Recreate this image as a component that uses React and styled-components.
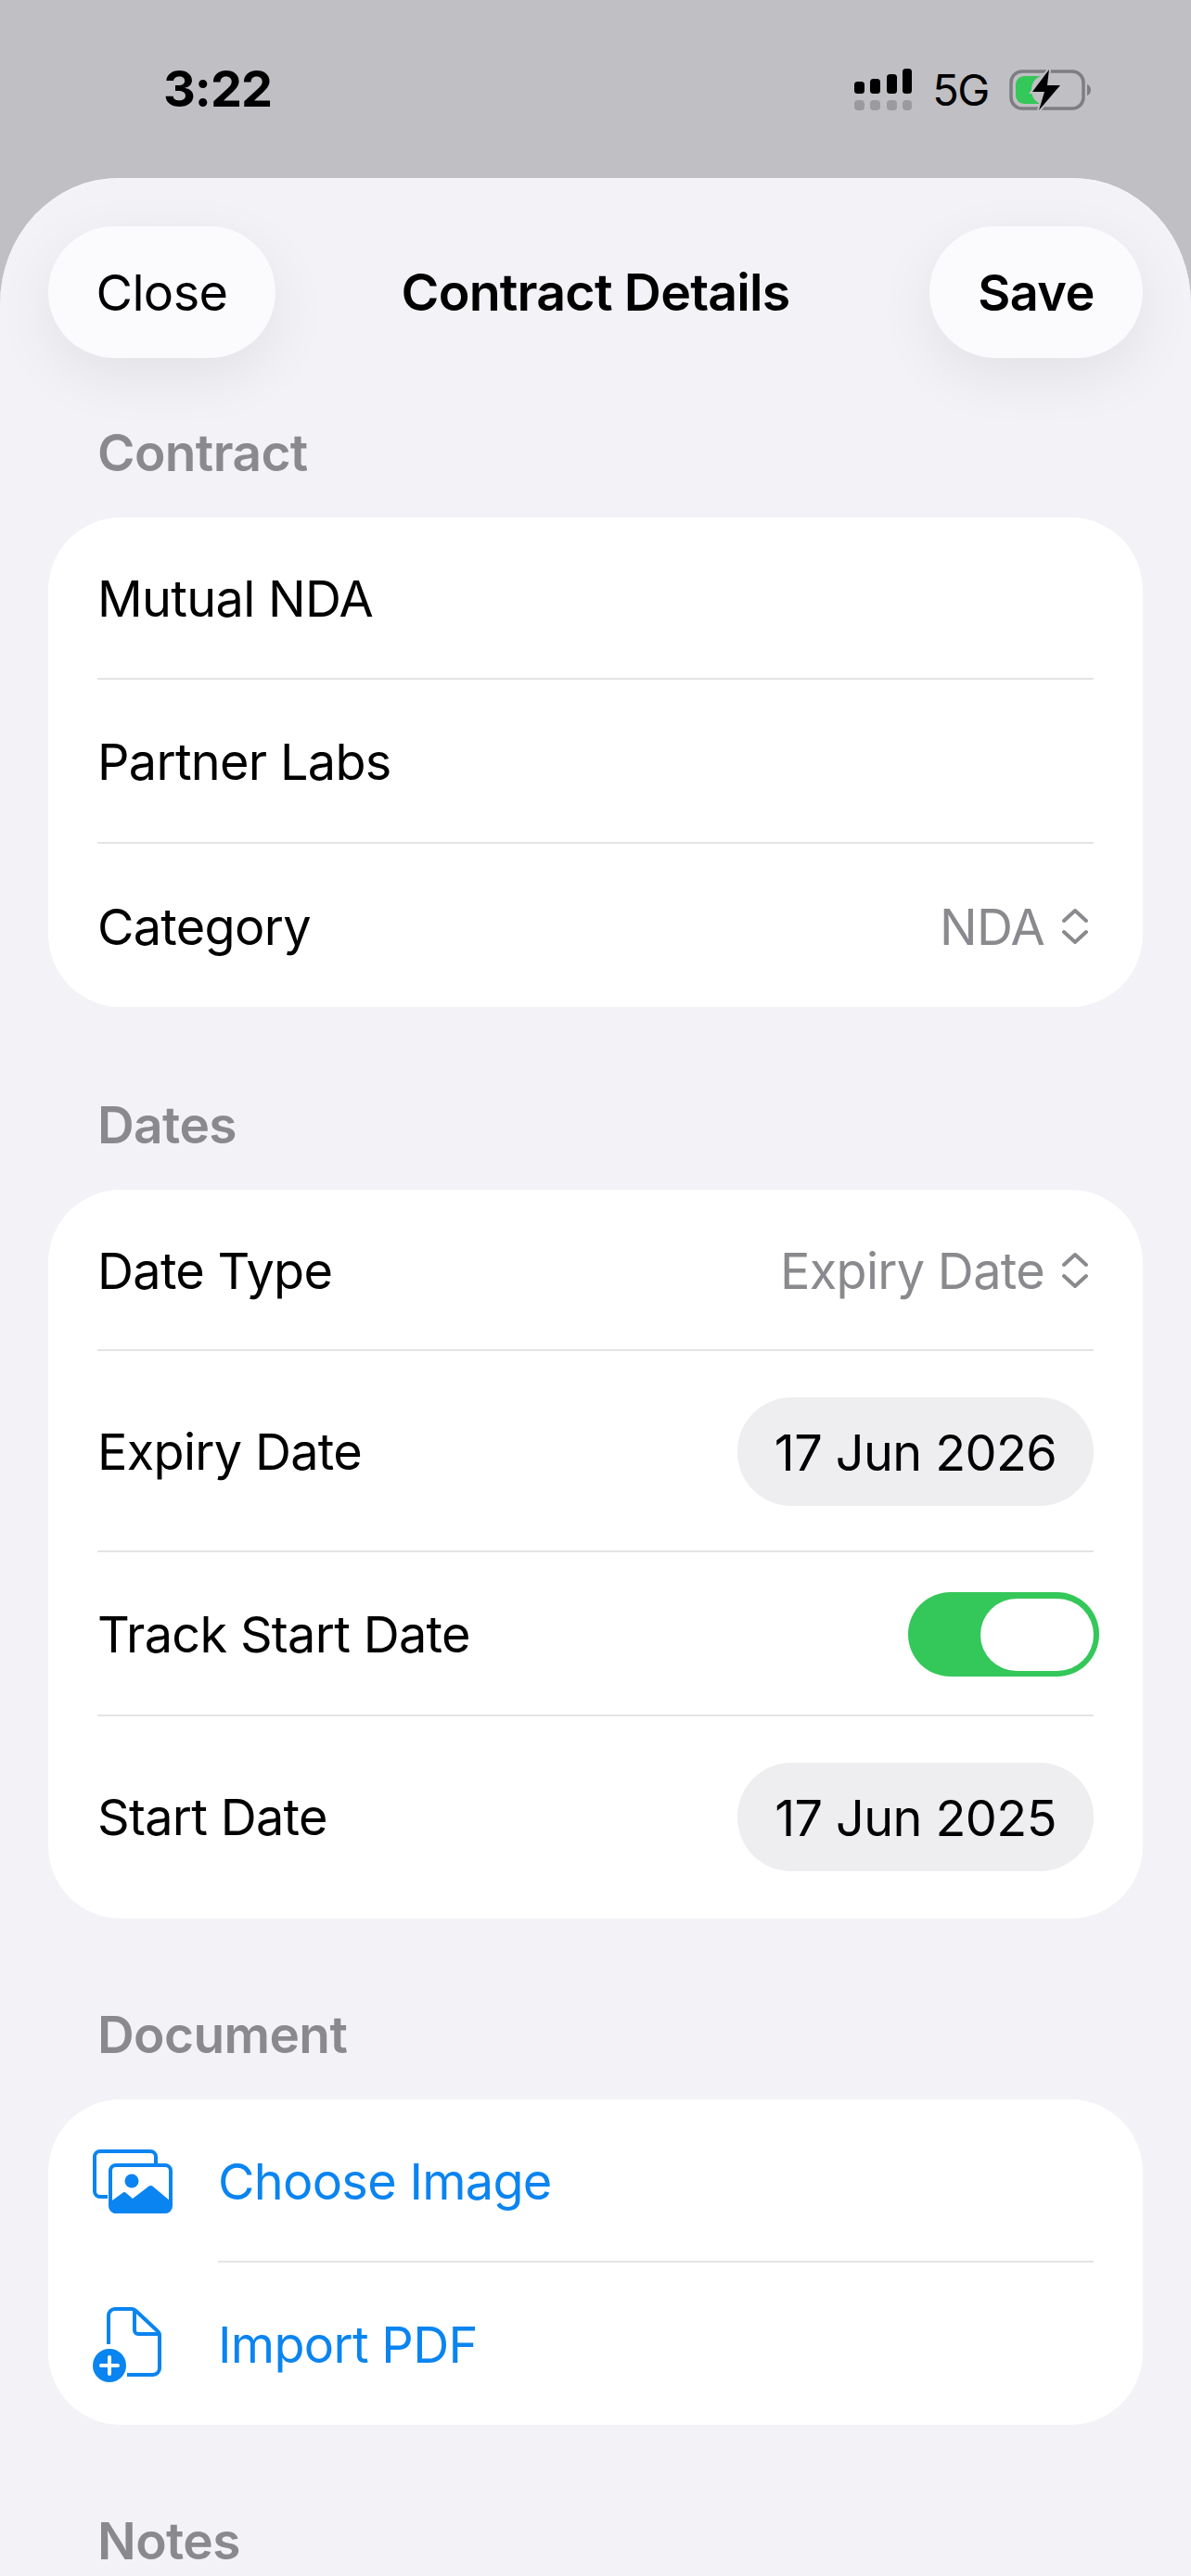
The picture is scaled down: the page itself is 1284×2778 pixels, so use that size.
import React from 'react';
import styled, { createGlobalStyle } from 'styled-components';

const GlobalStyle = createGlobalStyle`
  html, body {
    margin: 0;
    padding: 0;
    background: #c0bfc4;
  }
  body {
    font-family: Inter, "Noto Sans", "Liberation Sans", sans-serif;
    color: #000;
    -webkit-font-smoothing: antialiased;
  }
`;

const Screen = styled.div`
  width: 1284px;
  height: 2778px;
  overflow: hidden;
  display: flex;
  flex-direction: column;
  background: #c0bfc4;
`;

const StatusBar = styled.header`
  height: 192px;
  flex-shrink: 0;
  display: flex;
  align-items: flex-start;
  justify-content: space-between;
  padding: 66px 106px 0 176px;
  box-sizing: border-box;
`;

const Time = styled.span`
  font-size: 54px;
  line-height: 60px;
  font-weight: 700;
  letter-spacing: -1px;
`;

const StatusIcons = styled.div`
  display: flex;
  align-items: center;
  gap: 22px;
  margin-top: 6px;
`;

const Network = styled.span`
  font-size: 47px;
  line-height: 50px;
  font-weight: 400;
  letter-spacing: -1.4px;
`;

const Sheet = styled.main`
  flex: 1;
  background: #f2f2f7;
  border-radius: 128px 128px 0 0 / 136px 136px 0 0;
  padding: 0 52px;
  box-shadow: inset 0 1px 0 #f7f7fa;
`;

const NavBar = styled.nav`
  display: grid;
  grid-template-columns: 1fr auto 1fr;
  align-items: center;
  padding-top: 52px;
  height: 142px;
  box-sizing: content-box;
`;

const NavButton = styled.button`
  all: unset;
  box-sizing: border-box;
  height: 142px;
  width: ${(p) => p.$width}px;
  justify-self: ${(p) => (p.$bold ? 'end' : 'start')};
  border-radius: 71px;
  background: #fbfbfe;
  box-shadow: 0 20px 64px rgba(0, 0, 0, 0.07);
  font-size: 54px;
  letter-spacing: -0.6px;
  font-weight: ${(p) => (p.$bold ? 600 : 400)};
  display: flex;
  align-items: center;
  justify-content: center;
`;

const Title = styled.h1`
  margin: 0;
  font-size: 55.5px;
  line-height: 60px;
  font-weight: 600;
  letter-spacing: -0.8px;
`;

const SectionLabel = styled.h2`
  margin: ${(p) => p.$top}px 0 0 53px;
  height: 60px;
  font-size: 55px;
  line-height: 60px;
  font-weight: 600;
  letter-spacing: -0.6px;
  color: #8a8a8e;
`;

const Card = styled.section`
  margin-top: 40px;
  background: #fff;
  border-radius: 78px;
  overflow: hidden;
`;

const Row = styled.div`
  height: ${(p) => p.$height || 175}px;
  box-sizing: border-box;
  display: flex;
  align-items: center;
  justify-content: space-between;
  padding: 2px 53px ${(p) => p.$bottom || 0}px 53px;
  font-size: 54px;
  letter-spacing: -0.7px;
`;

const ActionRow = styled(Row)`
  justify-content: flex-start;
  padding-left: 48px;
  color: #0a84f0;
`;

const IconSlot = styled.span`
  width: 135px;
  flex-shrink: 0;
  display: flex;
  align-items: center;
`;

const Divider = styled.div`
  height: 2px;
  margin: 0 53px 0 ${(p) => p.$inset || 53}px;
  background: #e4e4e6;
`;

const Picker = styled.span`
  display: flex;
  align-items: center;
  gap: 18px;
  margin-right: 5px;
  color: #8a8a8e;
`;

const DatePill = styled.span`
  height: 117px;
  width: 384px;
  border-radius: 58px;
  background: #eeeef0;
  display: flex;
  align-items: center;
  justify-content: center;
  padding-top: 1px;
  box-sizing: border-box;
  color: #000;
  letter-spacing: -0.6px;
`;

const Toggle = styled.span`
  width: 206px;
  height: 91px;
  margin-right: -6px;
  border-radius: 46px;
  background: #34c759;
  display: flex;
  align-items: center;
  justify-content: flex-end;
  padding-right: 6px;
  box-sizing: border-box;
`;

const ToggleThumb = styled.span`
  width: 122px;
  height: 78px;
  border-radius: 39px;
  background: #fff;
`;

const SignalIcon = () => (
  <svg width="62" height="46" viewBox="0 0 62 46" fill="#000">
    <rect x="0" y="14" width="11" height="13" rx="3.5" />
    <rect x="17" y="11" width="11" height="16" rx="3.5" />
    <rect x="35" y="6" width="11" height="21" rx="3.5" />
    <rect x="52" y="0" width="10" height="27" rx="3.5" />
    <g fill="#9b9a9f">
      <rect x="0" y="34" width="11" height="11" rx="4" />
      <rect x="17" y="34" width="11" height="11" rx="4" />
      <rect x="35" y="34" width="11" height="11" rx="4" />
      <rect x="52" y="34" width="10" height="11" rx="4" />
    </g>
  </svg>
);

const BatteryIcon = () => (
  <svg width="90" height="46" viewBox="0 0 90 46">
    <rect x="2" y="3" width="78" height="40" rx="12" fill="none" stroke="#7e7e82" strokeWidth="3.5" />
    <path d="M84 17c3 1 4 4 4 6s-1 5-4 6z" fill="#7e7e82" />
    <path d="M7 18c0-6 4-10 10-10h17c-6 2-10 8-10 15s4 13 10 15H17c-6 0-10-4-10-10z" fill="#34c759" />
    <path d="M43 1L25 25h13l-6 20 23-27H41l2-17z" fill="#000" stroke="#c0bfc4" strokeWidth="4" paintOrder="stroke" />
  </svg>
);

const UpDownIcon = () => (
  <svg width="30" height="42" viewBox="0 0 30 42" fill="none" stroke="currentColor" strokeWidth="4" strokeLinecap="round" strokeLinejoin="round">
    <path d="M3 15L15 4l12 11" />
    <path d="M3 27l12 11 12-11" />
  </svg>
);

const ImagesIcon = () => (
  <svg width="86" height="69" viewBox="0 0 86 69" fill="none" stroke="#0a84f0" strokeWidth="4">
    <path d="M16 51H8a6 6 0 0 1-6-6V8a6 6 0 0 1 6-6h54a6 6 0 0 1 6 6v7" />
    <rect x="19" y="17" width="65" height="50" rx="6" />
    <circle cx="42" cy="34" r="7.5" fill="#0a84f0" stroke="none" />
    <path d="M21 55L32 47a3 3 0 0 1 4 0L43 53 60 40a4 4 0 0 1 5 0L84 56V62a7 7 0 0 1-7 7H25a6 6 0 0 1-6-6z" fill="#0a84f0" stroke="none" />
  </svg>
);

const DocPlusIcon = () => (
  <svg width="74" height="82" viewBox="0 0 74 82" fill="none">
    <g stroke="#0a84f0" strokeWidth="4" strokeLinejoin="round">
      <path d="M17 40V9a7 7 0 0 1 7-7h18a6 6 0 0 1 4.500 2L70 26a6 6 0 0 1 2 5v35a7 7 0 0 1-7 7H37" />
      <path d="M45 3v22a4 4 0 0 0 4 4h22" />
    </g>
    <circle cx="18" cy="63" r="18" fill="#0a84f0" />
    <path d="M18 54v18M9 63h18" stroke="#fff" strokeWidth="4" strokeLinecap="round" />
  </svg>
);

const App = () => (
  <Screen>
    <GlobalStyle />
    <StatusBar>
      <Time>3:22</Time>
      <StatusIcons>
        <SignalIcon />
        <Network>5G</Network>
        <BatteryIcon />
      </StatusIcons>
    </StatusBar>
    <Sheet>
      <NavBar>
        <NavButton $width={245}>Close</NavButton>
        <Title>Contract Details</Title>
        <NavButton $bold $width={230}>Save</NavButton>
      </NavBar>

      <SectionLabel $top={72}>Contract</SectionLabel>
      <Card>
        <Row $height={173}>Mutual NDA</Row>
        <Divider />
        <Row>Partner Labs</Row>
        <Divider />
        <Row $height={176}>
          Category
          <Picker>
            NDA
            <UpDownIcon />
          </Picker>
        </Row>
      </Card>

      <SectionLabel $top={97}>Dates</SectionLabel>
      <Card>
        <Row $height={172}>
          Date Type
          <Picker>
            Expiry Date
            <UpDownIcon />
          </Picker>
        </Row>
        <Divider />
        <Row $height={215}>
          Expiry Date
          <DatePill>17 Jun 2026</DatePill>
        </Row>
        <Divider />
        <Row>
          Track Start Date
          <Toggle>
            <ToggleThumb />
          </Toggle>
        </Row>
        <Divider />
        <Row $height={218} $bottom={3}>
          Start Date
          <DatePill>17 Jun 2025</DatePill>
        </Row>
      </Card>

      <SectionLabel $top={95}>Document</SectionLabel>
      <Card>
        <ActionRow $height={174}>
          <IconSlot>
            <ImagesIcon />
          </IconSlot>
          Choose Image
        </ActionRow>
        <Divider $inset={183} />
        <ActionRow>
          <IconSlot>
            <DocPlusIcon />
          </IconSlot>
          Import PDF
        </ActionRow>
      </Card>

      <SectionLabel $top={95}>Notes</SectionLabel>
    </Sheet>
  </Screen>
);

export default App;
